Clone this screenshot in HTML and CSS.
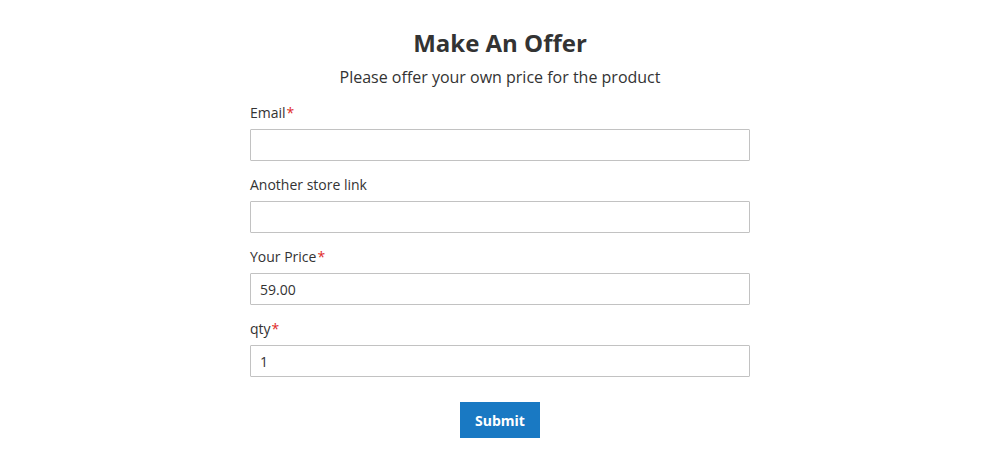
FILE: index.html
```html
<!DOCTYPE html>
<html>
<head>
<meta charset="utf-8">
<link rel="stylesheet" href="styles.css">
</head>
<body>
<div class="page">
  <form class="offer">
    <h1 class="title">Make An Offer</h1>
    <p class="subtitle">Please offer your own price for the product</p>
    <div class="field first">
      <label class="label">Email<span class="req">*</span></label>
      <input class="input" type="text" value="">
    </div>
    <div class="field">
      <label class="label">Another store link</label>
      <input class="input" type="text" value="">
    </div>
    <div class="field">
      <label class="label">Your Price<span class="req">*</span></label>
      <input class="input" type="text" value="59.00">
    </div>
    <div class="field">
      <label class="label">qty<span class="req">*</span></label>
      <input class="input" type="text" value="1">
    </div>
    <div class="actions">
      <button class="submit" type="button">Submit</button>
    </div>
  </form>
</div>
</body>
</html>
```
FILE: styles.css
```css
html, body {
  margin: 0;
  padding: 0;
  background: #fff;
}
body {
  font-family: "Open Sans", "Liberation Sans", sans-serif;
  color: #333;
}
.page {
  display: flex;
  justify-content: center;
  padding-top: 28px;
}
.offer {
  width: 500px;
  display: flex;
  flex-direction: column;
}
.title {
  margin: 0;
  text-align: center;
  font-size: 24px;
  line-height: 30px;
  font-weight: 700;
  color: #333;
}
.subtitle {
  margin: 8px 0 0;
  text-align: center;
  font-size: 16px;
  line-height: 22px;
  color: #333;
}
.field {
  display: flex;
  flex-direction: column;
  margin-top: 14px;
}
.field.first {
  margin-top: 15px;
}
.label {
  font-size: 14px;
  line-height: 20px;
  margin-bottom: 6px;
  color: #333;
}
.req {
  color: #e02b27;
  margin-left: 1px;
}
.input {
  box-sizing: border-box;
  height: 32px;
  border: 1px solid #c2c2c2;
  border-radius: 1px;
  padding: 0 9px;
  font-family: inherit;
  font-size: 14px;
  color: #333;
  outline: none;
}
.actions {
  display: flex;
  justify-content: center;
  margin-top: 25px;
}
.submit {
  width: 80px;
  height: 36px;
  border: none;
  background: #1979c3;
  color: #fff;
  font-family: inherit;
  font-size: 14px;
  font-weight: 700;
  cursor: pointer;
}
```
